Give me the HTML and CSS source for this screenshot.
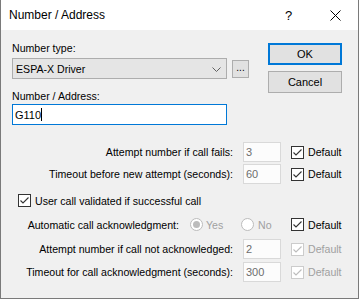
FILE: index.html
```html
<!DOCTYPE html>
<html lang="en">
<head>
    <meta charset="UTF-8">
    <title>Number / Address</title>
    <link rel="stylesheet" href="styles.css">
</head>
<body>
    <div class="window">
        <!-- Title bar -->
        <div class="titlebar">
            <span class="title">Number / Address</span>
            <span class="tb-btn help">?</span>
            <span class="tb-btn close">
                <svg width="11" height="11" viewBox="0 0 11 11"><path d="M0.5 0.5 L10.5 10.5 M10.5 0.5 L0.5 10.5" stroke="#000" stroke-width="1" fill="none"/></svg>
            </span>
        </div>

        <div class="body">
            <!-- Number type / address + dialog buttons -->
            <div class="top">
                <div class="fields">
                    <div class="label">Number type:</div>
                    <div class="combo-row">
                        <div class="combo">
                            <span>ESPA-X Driver</span>
                            <svg class="chevron" width="9" height="5" viewBox="0 0 9 5"><path d="M0.5 0.5 L4.5 4.5 L8.5 0.5" stroke="#606060" stroke-width="1" fill="none"/></svg>
                        </div>
                        <div class="browse">...</div>
                    </div>
                    <div class="label label-address">Number / Address:</div>
                    <div class="textbox focused">G110<span class="caret"></span></div>
                </div>
                <div class="buttons">
                    <div class="btn btn-default">OK</div>
                    <div class="btn">Cancel</div>
                </div>
            </div>

            <!-- Call options -->
            <div class="options">
                <div class="opt-row row-1">
                    <span class="opt-label">Attempt number if call fails:</span>
                    <span class="num disabled">3</span>
                    <span class="check-item"><span class="checkbox checked"></span>Default</span>
                </div>
                <div class="opt-row row-2">
                    <span class="opt-label">Timeout before new attempt (seconds):</span>
                    <span class="num disabled">60</span>
                    <span class="check-item"><span class="checkbox checked"></span>Default</span>
                </div>
                <div class="opt-row row-check">
                    <span class="check-item"><span class="checkbox checked"></span>User call validated if successful call</span>
                </div>
                <div class="opt-row row-radio">
                    <span class="opt-label short">Automatic call acknowledgment:</span>
                    <span class="radio-item yes"><span class="radio checked"></span>Yes</span>
                    <span class="radio-item no"><span class="radio"></span>No</span>
                    <span class="check-item"><span class="checkbox checked"></span>Default</span>
                </div>
                <div class="opt-row row-5">
                    <span class="opt-label">Attempt number if call not acknowledged:</span>
                    <span class="num disabled">2</span>
                    <span class="check-item off"><span class="checkbox checked"></span>Default</span>
                </div>
                <div class="opt-row row-6">
                    <span class="opt-label">Timeout for call acknowledgment (seconds):</span>
                    <span class="num disabled">300</span>
                    <span class="check-item off"><span class="checkbox checked"></span>Default</span>
                </div>
            </div>
        </div>
    </div>
</body>
</html>
```

FILE: styles.css
```css
body {
    margin: 0;
    font-family: "Liberation Sans", Arial, sans-serif;
    font-size: 10.6px;
    color: #000;
}

.window {
    width: 359px;
    height: 299px;
    box-sizing: border-box;
    border: 1px solid #7a7a7a;
    border-top: none;
    background-color: #f0f0f0;
}

/* title bar */
.titlebar {
    height: 30px;
    display: flex;
    align-items: center;
    background-color: #fff;
}

.title {
    flex: 1;
    padding-left: 8px;
    font-size: 12px;
}

.tb-btn {
    width: 45px;
    height: 30px;
    display: flex;
    justify-content: center;
    align-items: center;
}

.help {
    font-size: 13px;
    padding-left: 1px;
}

.close {
    width: 46px;
    padding-left: 1px;
}

/* body */
.body {
    padding-left: 11px;
}

.top {
    display: flex;
    height: 95px;
}

.fields {
    width: 237px;
    padding-top: 12px;
}

.label {
    line-height: 13px;
}

.label-address {
    margin-top: 11px;
}

.combo-row {
    display: flex;
    margin-top: 3px;
}

.combo {
    width: 215px;
    height: 21px;
    box-sizing: border-box;
    border: 1px solid #adadad;
    background-color: #e5e5e5;
    display: flex;
    align-items: center;
    justify-content: space-between;
    padding: 0 5px 0 3px;
}

.chevron {
    margin-top: 1px;
}

.browse {
    width: 17px;
    height: 18px;
    margin: 2px 0 0 5px;
    box-sizing: border-box;
    border: 1px solid #adadad;
    background-color: #e1e1e1;
    text-align: center;
    line-height: 13px;
    font-size: 10px;
}

.textbox {
    width: 215px;
    height: 21px;
    margin-top: 1px;
    box-sizing: border-box;
    border: 1px solid #7a7a7a;
    background-color: #fff;
    display: flex;
    align-items: center;
    padding-left: 2px;
    font-size: 11px;
}

.textbox.focused {
    border-color: #0078d7;
}

.caret {
    display: inline-block;
    width: 1px;
    height: 13px;
    background-color: #000;
}

.buttons {
    margin-left: 19px;
    padding-top: 13px;
    display: flex;
    flex-direction: column;
    gap: 6px;
}

.btn {
    width: 74px;
    height: 22px;
    box-sizing: border-box;
    border: 1px solid #adadad;
    background-color: #e1e1e1;
    display: flex;
    justify-content: center;
    align-items: center;
    font-size: 11px;
}

.btn-default {
    border: 2px solid #0078d7;
}

/* option rows */
.options {
    padding-top: 17px;
}

.opt-row {
    display: flex;
    align-items: center;
    height: 20px;
}

.row-2 { margin-top: 2px; }
.row-check { height: 17px; margin-top: 8px; padding-left: 6px; }
.row-radio { height: 17px; margin-top: 7px; }
.row-5 { margin-top: 6px; }
.row-6 { margin-top: 3px; }

.opt-label {
    width: 221px;
    margin-right: 10px;
    text-align: right;
    white-space: nowrap;
}

.opt-label.short {
    width: 167px;
    margin-right: 11px;
}

.num {
    width: 38px;
    height: 20px;
    margin-right: 10px;
    box-sizing: border-box;
    border: 1px solid #d9d9d9;
    background-color: #fcfcfc;
    padding-left: 2px;
    display: flex;
    align-items: center;
    color: #6d6d6d;
    font-size: 11px;
}

.check-item {
    display: flex;
    align-items: center;
    gap: 4px;
    white-space: nowrap;
}

.check-item.off {
    color: #a0a0a0;
}

.checkbox {
    width: 13px;
    height: 13px;
    box-sizing: border-box;
    border: 1px solid #333;
    background-color: #fff;
}

.checkbox.checked {
    background-image: url("data:image/svg+xml,%3Csvg xmlns='http://www.w3.org/2000/svg' width='11' height='11'%3E%3Cpath d='M1.5 5.5 L4 8 L9.5 2.5' stroke='%23333' stroke-width='1.1' fill='none'/%3E%3C/svg%3E");
    background-repeat: no-repeat;
}

.check-item.off .checkbox {
    border-color: #cccccc;
}

.check-item.off .checkbox.checked {
    background-image: url("data:image/svg+xml,%3Csvg xmlns='http://www.w3.org/2000/svg' width='11' height='11'%3E%3Cpath d='M1.5 5.5 L4 8 L9.5 2.5' stroke='%23bcbcbc' stroke-width='1.1' fill='none'/%3E%3C/svg%3E");
}

.radio-item {
    display: flex;
    align-items: center;
    gap: 3px;
    color: #a0a0a0;
}

.radio-item.yes { width: 51px; }
.radio-item.no { width: 40px; margin-right: 10px; gap: 4px; }

.radio {
    width: 13px;
    height: 13px;
    box-sizing: border-box;
    border: 1px solid #bcbcbc;
    border-radius: 50%;
    background-color: #fff;
    display: flex;
    justify-content: center;
    align-items: center;
}

.radio.checked::after {
    content: "";
    width: 7px;
    height: 7px;
    border-radius: 50%;
    background-color: #bcbcbc;
}
```
